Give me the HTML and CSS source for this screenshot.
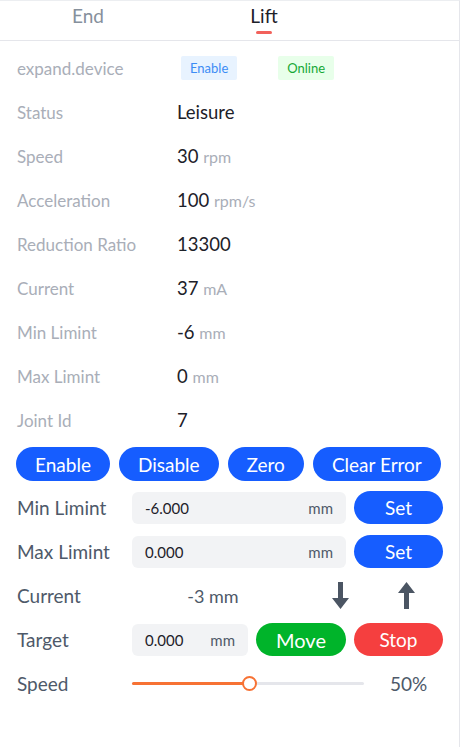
FILE: index.html
```html
<!DOCTYPE html>
<html>
<head>
<meta charset="utf-8">
<link rel="stylesheet" href="styles.css">
</head>
<body>
<div class="panel">
  <div class="tabs">
    <div class="tab">End</div>
    <div class="tab active">Lift<span class="ink"></span></div>
  </div>
  <div class="info">
    <div class="row"><span class="label">expand.device</span><span class="val"><span class="badge blue">Enable</span><span class="badge green">Online</span></span></div>
    <div class="row"><span class="label">Status</span><span class="val">Leisure</span></div>
    <div class="row"><span class="label">Speed</span><span class="val">30 <span class="unit">rpm</span></span></div>
    <div class="row"><span class="label">Acceleration</span><span class="val">100 <span class="unit">rpm/s</span></span></div>
    <div class="row"><span class="label">Reduction Ratio</span><span class="val">13300</span></div>
    <div class="row"><span class="label">Current</span><span class="val">37 <span class="unit">mA</span></span></div>
    <div class="row"><span class="label">Min Limint</span><span class="val">-6 <span class="unit">mm</span></span></div>
    <div class="row"><span class="label">Max Limint</span><span class="val">0 <span class="unit">mm</span></span></div>
    <div class="row"><span class="label">Joint Id</span><span class="val">7</span></div>
  </div>
  <div class="actions">
    <button class="btn blue">Enable</button>
    <button class="btn blue">Disable</button>
    <button class="btn blue">Zero</button>
    <button class="btn blue">Clear Error</button>
  </div>
  <div class="form">
    <div class="frow">
      <span class="flabel">Min Limint</span>
      <div class="input wide"><span class="num">-6.000</span><span class="mm">mm</span></div>
      <button class="btn blue act">Set</button>
    </div>
    <div class="frow">
      <span class="flabel">Max Limint</span>
      <div class="input wide"><span class="num">0.000</span><span class="mm">mm</span></div>
      <button class="btn blue act">Set</button>
    </div>
    <div class="frow">
      <span class="flabel">Current</span>
      <span class="cur">-3 mm</span>
      <div class="arrows">
        <svg class="arrow" viewBox="0 0 17 27" width="17" height="27"><path d="M6 0h5v16h6L8.5 27 0 16h6z"/></svg>
        <svg class="arrow" viewBox="0 0 17 27" width="17" height="27"><path d="M8.5 0 17 11h-6v16H6V11H0z"/></svg>
      </div>
    </div>
    <div class="frow">
      <span class="flabel">Target</span>
      <div class="input short"><span class="num">0.000</span><span class="mm">mm</span></div>
      <button class="btn green act move">Move</button>
      <button class="btn red act">Stop</button>
    </div>
    <div class="frow">
      <span class="flabel">Speed</span>
      <div class="slider">
        <div class="fill" style="width: 117px"></div>
        <div class="thumb" style="left: 117px"></div>
      </div>
      <span class="pct">50%</span>
    </div>
  </div>
</div>
</body>
</html>
```

FILE: styles.css
```css
* { box-sizing: border-box; }
body {
  margin: 0;
  background: #ffffff;
  font-family: Lato, "Noto Sans", sans-serif;
}
.panel {
  width: 460px;
  height: 747px;
  border-top: 1px solid #eceef1;
  border-right: 1px solid #e5e6eb;
  background: #ffffff;
}
.tabs {
  display: flex;
  height: 40px;
  border-bottom: 1px solid #e5e6eb;
}
.tab {
  position: relative;
  width: 176px;
  text-align: center;
  font-size: 19px;
  line-height: 24px;
  padding-top: 3px;
  color: #86909c;
}
.tab.active { color: #1d2129; }
.ink {
  position: absolute;
  top: 30px;
  left: 50%;
  margin-left: -8px;
  width: 16px;
  height: 3px;
  border-radius: 2px;
  background: #f2615b;
}
.info { padding-top: 5px; }
.row {
  display: flex;
  align-items: center;
  height: 44px;
  padding-left: 17px;
}
.label {
  width: 160px;
  font-size: 17px;
  color: #a9aeb8;
}
.val {
  display: flex;
  align-items: baseline;
  font-size: 18.5px;
  color: #1d2129;
  white-space: pre;
}
.unit { font-size: 16px; color: #a9aeb8; }
.badge {
  display: inline-block;
  height: 24px;
  line-height: 24px;
  padding: 0 9px;
  font-size: 13px;
  border-radius: 2px;
}
.badge.blue { background: #e8f3ff; color: #3c8cf5; margin-left: 4px; }
.badge.green { background: #e8ffea; color: #16a836; margin-left: 41px; }
.actions {
  display: flex;
  gap: 9px;
  padding-left: 16px;
  margin-top: 5px;
}
.btn {
  border: none;
  height: 34px;
  padding: 0 19px;
  border-radius: 17px;
  font-family: inherit;
  font-size: 19px;
  color: #ffffff;
}
.btn.blue { background: #165dff; }
.btn.green { background: #00b42a; }
.btn.red { background: #f53f3f; }
.form {
  display: flex;
  flex-direction: column;
  gap: 11px;
  margin-top: 10px;
}
.frow {
  display: flex;
  align-items: center;
  height: 33px;
  padding-left: 17px;
}
.flabel {
  width: 115px;
  font-size: 19px;
  color: #4e5969;
}
.input {
  display: flex;
  align-items: center;
  justify-content: space-between;
  height: 32px;
  padding: 0 13px;
  border-radius: 6px;
  background: #f2f3f5;
  font-size: 15px;
}
.input.wide { width: 214px; }
.input.short { width: 116px; }
.num { color: #1d2129; }
.mm { color: #4e5969; }
.btn.act {
  width: 89px;
  height: 33px;
  padding: 0;
  margin-left: 8px;
}
.btn.move { width: 90px; font-size: 20px; }
.cur {
  width: 162px;
  text-align: center;
  font-size: 18px;
  color: #4e5969;
}
.arrows {
  display: flex;
  gap: 49px;
  margin-left: 38px;
}
.arrow { fill: #4b5563; display: block; }
.slider {
  position: relative;
  width: 232px;
  height: 3px;
  border-radius: 2px;
  background: #e5e6eb;
}
.fill {
  height: 3px;
  border-radius: 2px;
  background: #f77234;
}
.thumb {
  position: absolute;
  top: -6px;
  width: 15px;
  height: 15px;
  margin-left: -7px;
  border-radius: 50%;
  border: 2px solid #f77234;
  background: #ffffff;
}
.pct {
  margin-left: 26px;
  font-size: 19px;
  color: #4e5969;
}
```
